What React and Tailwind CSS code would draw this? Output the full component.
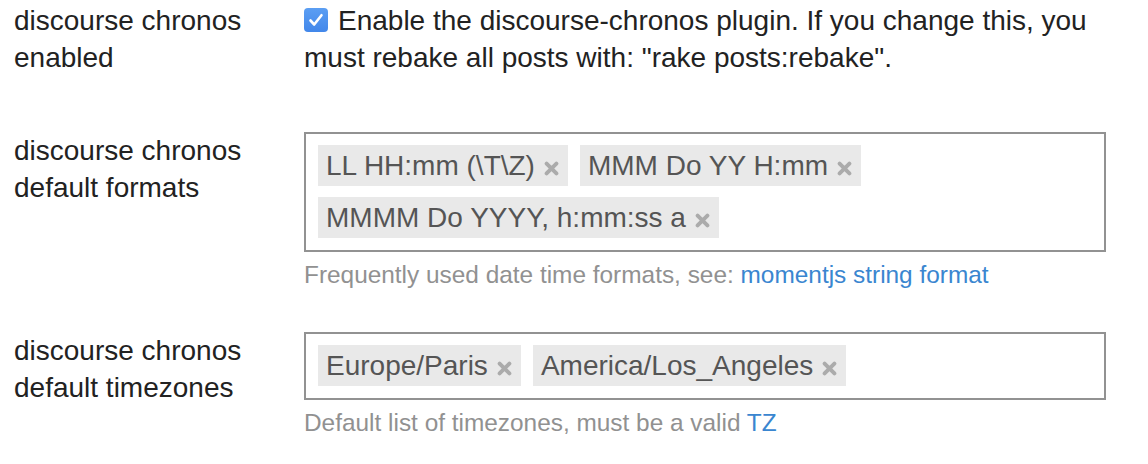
const formats = ["LL HH:mm (\\T\\Z)", "MMM Do YY H:mm", "MMMM Do YYYY, h:mm:ss a"];
const timezones = ["Europe/Paris", "America/Los_Angeles"];

const CloseIcon = () => (
  <svg width="15" height="15" viewBox="0 0 15 15" className="mt-[5px] shrink-0">
    <path d="M2.6 2.6 L12.4 12.4 M12.4 2.6 L2.6 12.4" stroke="#ababab" strokeWidth="3.9" strokeLinecap="round" />
  </svg>
);

const Chip = ({ label }) => (
  <div className="h-[41px] flex items-center gap-[9px] pl-[8px] pr-[9px] bg-[#e9e9e9] text-[#555]">
    <span>{label}</span>
    <CloseIcon />
  </div>
);

const ChipBox = ({ items }) => (
  <div className="border-2 border-[#929292] pt-[11px] pb-[12px] px-[12px] flex flex-wrap gap-x-[12px] gap-y-[11px]">
    {items.map((item) => (
      <Chip key={item} label={item} />
    ))}
  </div>
);

const SettingRow = ({ label, children, className = "" }) => (
  <div className={`grid grid-cols-[304px_802px] ${className}`}>
    <div className="pl-[14px] pr-4">{label}</div>
    <div>{children}</div>
  </div>
);

export default function App() {
  return (
    <div className="w-[1148px] h-[464px] bg-white pt-[2px] font-['Liberation_Sans',Arial,sans-serif] text-[28px] leading-[37px] text-[#222] overflow-hidden">
      <SettingRow
        className="mb-[56px]"
        label={
          <>
            discourse chronos
            <br />
            enabled
          </>
        }
      >
        <p>
          <span className="inline-block w-6 h-6 rounded-[4px] bg-gradient-to-b from-[#5b9ef3] to-[#4287ea] align-[-2px] mr-[10px] relative">
            <svg width="24" height="24" viewBox="0 0 24 24" className="absolute inset-0">
              <path d="M6.5 12.5 L10.2 16.5 L17.5 7.2" fill="none" stroke="white" strokeWidth="2.6" strokeLinecap="round" strokeLinejoin="round" />
            </svg>
          </span>
          Enable the discourse-chronos plugin. If you change this, you must rebake all posts with: "rake posts:rebake".
        </p>
      </SettingRow>

      <SettingRow
        className="mb-[41px]"
        label={
          <>
            discourse chronos
            <br />
            default formats
          </>
        }
      >
        <ChipBox items={formats} />
        <p className="mt-[7px] text-[24.4px] leading-[32px] text-[#919191]">
          Frequently used date time formats, see:{" "}
          <a className="text-[#3a86d0]">momentjs string format</a>
        </p>
      </SettingRow>

      <SettingRow
        label={
          <>
            discourse chronos
            <br />
            default timezones
          </>
        }
      >
        <ChipBox items={timezones} />
        <p className="mt-[7px] text-[24.4px] leading-[32px] text-[#919191]">
          Default list of timezones, must be a valid <a className="text-[#3a86d0]">TZ</a>
        </p>
      </SettingRow>
    </div>
  );
}
